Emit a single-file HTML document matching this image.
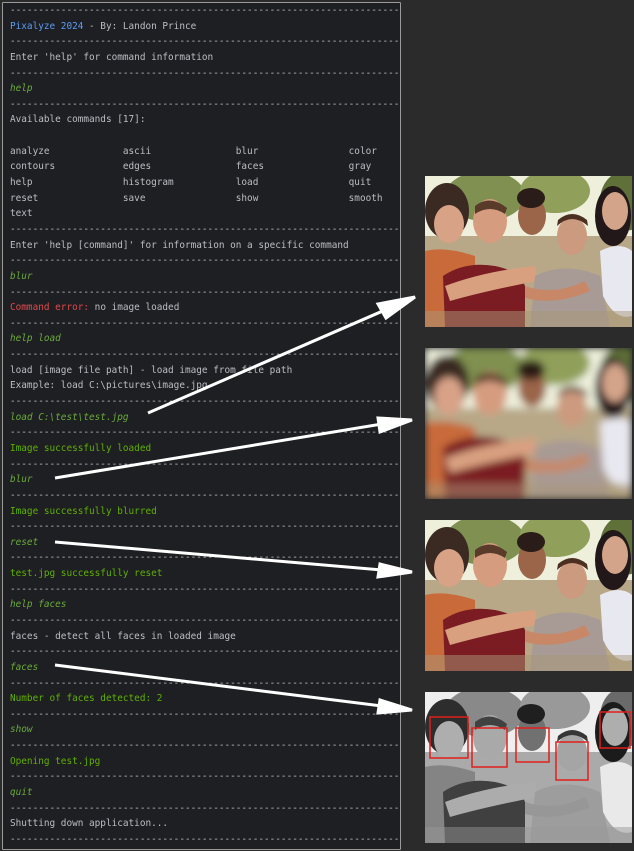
<!DOCTYPE html>
<html><head><meta charset="utf-8"><style>
html,body{margin:0;padding:0;background:#2b2b2b;width:634px;height:851px;overflow:hidden;position:relative}
.panel{position:absolute;left:2px;top:2px;width:397px;height:846px;background:#1e1f22;border:1px solid #9a9a9a;border-radius:1px}
pre{margin:0;position:absolute;left:10px;top:3px;font-family:"DejaVu Sans Mono","Liberation Mono",monospace;font-size:9.4px;line-height:15.64px;color:#bcbec4}
.d{color:#bcbec4;letter-spacing:0}
.b{color:#5c9cf5}
.c{color:#6aab3a;font-style:italic}
.g{color:#5fb000}
.r{color:#e5484d}
.img{position:absolute;left:425px;width:207px;height:151px;overflow:hidden}
svg.ov{position:absolute;left:0;top:0}
</style></head><body>
<svg width="0" height="0" style="position:absolute">
<defs>
<symbol id="scene" viewBox="0 0 207 151">
<rect width="207" height="151" fill="#b8a888"/>
<rect x="0" y="0" width="207" height="60" fill="#eef0dc"/>
<ellipse cx="60" cy="20" rx="40" ry="25" fill="#7f9050"/>
<ellipse cx="130" cy="15" rx="35" ry="22" fill="#90a05a"/>
<ellipse cx="200" cy="25" rx="25" ry="30" fill="#5f7038"/>
<ellipse cx="22" cy="35" rx="22" ry="28" fill="#3a2a22"/>
<ellipse cx="24" cy="48" rx="15" ry="19" fill="#d8a287"/>
<path d="M0 75 Q20 70 50 80 L50 151 L0 151Z" fill="#c86a3a"/>
<ellipse cx="65" cy="45" rx="17" ry="22" fill="#d69c80"/>
<path d="M50 30 Q65 18 82 32 L80 38 Q65 28 50 38Z" fill="#5a3a28"/>
<path d="M18 100 Q40 85 70 90 Q95 95 100 110 L100 151 L20 151Z" fill="#7a1c22"/>
<path d="M20 110 Q60 95 110 90 L112 105 Q60 115 25 125Z" fill="#d9a080"/>
<ellipse cx="107" cy="40" rx="14" ry="19" fill="#9a6548"/>
<ellipse cx="106" cy="22" rx="14" ry="10" fill="#2a1c18"/>
<ellipse cx="147" cy="60" rx="15" ry="19" fill="#cc9a7e"/>
<path d="M132 50 Q147 36 163 50 L162 44 Q147 32 133 44Z" fill="#4a3020"/>
<path d="M110 100 Q140 85 175 100 L185 151 L105 151Z" fill="#a89a94"/>
<path d="M100 110 Q130 120 160 105 L165 115 Q130 130 100 122Z" fill="#c88868"/>
<ellipse cx="188" cy="40" rx="18" ry="30" fill="#22181a"/>
<ellipse cx="190" cy="35" rx="13" ry="19" fill="#d4a48a"/>
<path d="M175 75 Q195 65 207 75 L207 140 Q190 145 178 120Z" fill="#e8e8f0"/>
<rect x="0" y="135" width="207" height="16" fill="#a89878" opacity=".5"/>
</symbol>
<filter id="bl"><feGaussianBlur stdDeviation="4"/></filter>
<filter id="gr"><feColorMatrix type="saturate" values="0"/></filter>
</defs></svg>

<div class="panel"></div>
<pre><span class="d">---------------------------------------------------------------------</span>
<span class="b">Pixalyze 2024</span> - By: Landon Prince
<span class="d">---------------------------------------------------------------------</span>
Enter 'help' for command information
<span class="d">---------------------------------------------------------------------</span>
<span class="c">help</span>
<span class="d">---------------------------------------------------------------------</span>
Available commands [17]:

analyze             ascii               blur                color
contours            edges               faces               gray
help                histogram           load                quit
reset               save                show                smooth
text
<span class="d">---------------------------------------------------------------------</span>
Enter 'help [command]' for information on a specific command
<span class="d">---------------------------------------------------------------------</span>
<span class="c">blur</span>
<span class="d">---------------------------------------------------------------------</span>
<span class="r">Command error:</span> no image loaded
<span class="d">---------------------------------------------------------------------</span>
<span class="c">help load</span>
<span class="d">---------------------------------------------------------------------</span>
load [image file path] - load image from file path
Example: load C:\pictures\image.jpg
<span class="d">---------------------------------------------------------------------</span>
<span class="c">load C:\test\test.jpg</span>
<span class="d">---------------------------------------------------------------------</span>
<span class="g">Image successfully loaded</span>
<span class="d">---------------------------------------------------------------------</span>
<span class="c">blur</span>
<span class="d">---------------------------------------------------------------------</span>
<span class="g">Image successfully blurred</span>
<span class="d">---------------------------------------------------------------------</span>
<span class="c">reset</span>
<span class="d">---------------------------------------------------------------------</span>
<span class="g">test.jpg successfully reset</span>
<span class="d">---------------------------------------------------------------------</span>
<span class="c">help faces</span>
<span class="d">---------------------------------------------------------------------</span>
faces - detect all faces in loaded image
<span class="d">---------------------------------------------------------------------</span>
<span class="c">faces</span>
<span class="d">---------------------------------------------------------------------</span>
<span class="g">Number of faces detected: 2</span>
<span class="d">---------------------------------------------------------------------</span>
<span class="c">show</span>
<span class="d">---------------------------------------------------------------------</span>
<span class="g">Opening test.jpg</span>
<span class="d">---------------------------------------------------------------------</span>
<span class="c">quit</span>
<span class="d">---------------------------------------------------------------------</span>
Shutting down application...
<span class="d">---------------------------------------------------------------------</span></pre>

<div class="img" style="top:176px"><svg width="207" height="151"><use href="#scene"/></svg></div>
<div class="img" style="top:348px"><svg width="207" height="151"><g filter="url(#bl)"><use href="#scene"/></g></svg></div>
<div class="img" style="top:520px"><svg width="207" height="151"><use href="#scene"/></svg></div>
<div class="img" style="top:692px"><svg width="207" height="151"><g filter="url(#gr)"><use href="#scene"/></g>
<g fill="none" stroke="#e0201a" stroke-width="1.5">
<rect x="5" y="25" width="38" height="41"/><rect x="47" y="36" width="35" height="39"/>
<rect x="91" y="36" width="33" height="34"/><rect x="131" y="50" width="32" height="38"/>
<rect x="175" y="20" width="30" height="36"/></g></svg></div>

<svg class="ov" width="634" height="851">
<g stroke="#fff" stroke-width="3" fill="#fff">
<line x1="148" y1="413" x2="385" y2="310"/><polygon points="415,297 378,304 386,318"/>
<line x1="55" y1="478" x2="382" y2="424"/><polygon points="412,420 378,418 380,432"/>
<line x1="55" y1="542" x2="382" y2="570"/><polygon points="412,572 380,564 378,577"/>
<line x1="55" y1="665" x2="382" y2="706"/><polygon points="412,710 380,700 378,713"/>
</g></svg>
</body></html>
